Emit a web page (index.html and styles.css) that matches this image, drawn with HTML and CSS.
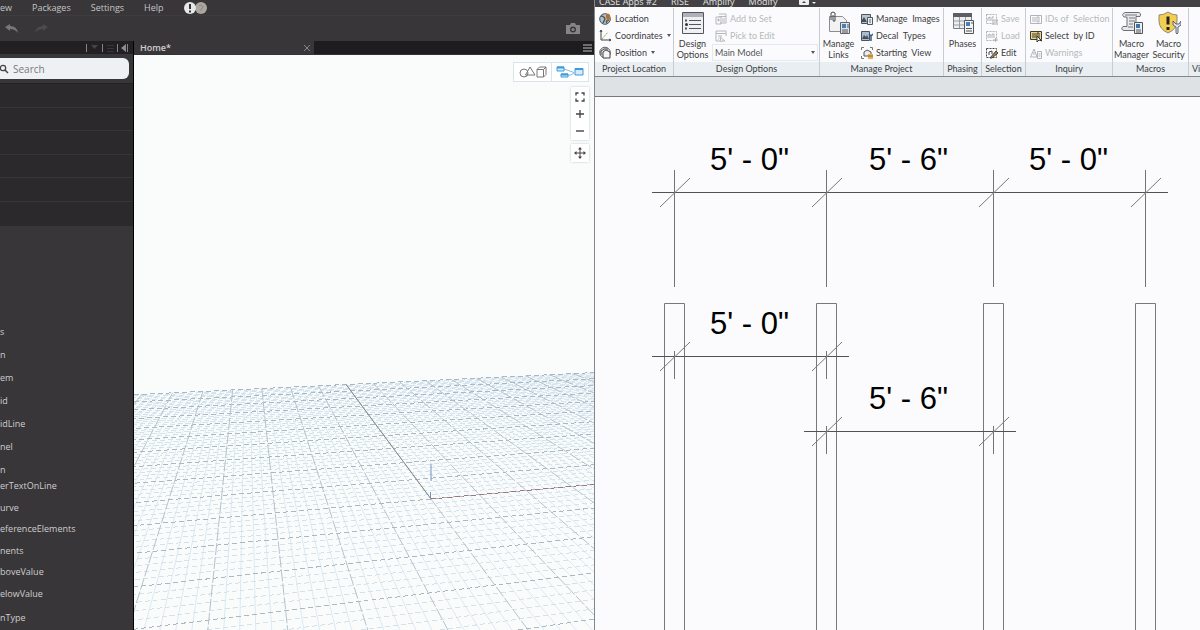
FILE: index.html
```html
<!DOCTYPE html>
<html lang="en">
<head>
<meta charset="utf-8">
<title>Home* - Graph workspace and model view</title>
<link rel="stylesheet" href="styles.css">
</head>
<body>
<div class="desktop">
  <section class="graph-app" aria-label="Graph editor">
    <nav class="menubar">
      <a href="#view">ew</a>
      <a href="#packages">Packages</a>
      <a href="#settings">Settings</a>
      <a href="#help">Help</a>
      <button class="notice" aria-label="Notifications">
        <svg width="24" height="14" viewBox="0 0 24 14"><circle cx="17" cy="7" r="6" fill="#a9a79f"/><circle cx="6" cy="7" r="6" fill="#e6e8ea"/><path d="M6 3v5M6 9.500v2" stroke="#333" stroke-width="2"/><path d="M15 5q2-2 3.500 0t-1.500 3v2" fill="none" stroke="#8b897f"/></svg>
      </button>
    </nav>
    <div class="toolbar">
      <button aria-label="Undo"><svg width="14" height="10" viewBox="0 0 14 10"><path d="M0 3 5 0v2q7 0 8 7Q10 5 5 5v2z" fill="#77777b"/></svg></button>
      <button aria-label="Redo"><svg width="14" height="10" viewBox="0 0 14 10"><path d="M14 3 9 0v2Q2 2 1 9q3-4 8-4v2z" fill="#4b4a4c"/></svg></button>
      <button class="camera" aria-label="Export image"><svg width="16" height="12" viewBox="0 0 16 12"><path d="M1 2h4l1-2h4l1 2h4v9H1z" fill="#858587"/><circle cx="8" cy="6.500" r="3" fill="#383638"/><circle cx="8" cy="6.500" r="1.600" fill="#858587"/></svg></button>
    </div>
    <div class="work">
      <aside class="library">
        <div class="library-head">
          <svg width="44" height="10" viewBox="0 0 44 10"><path d="M1.500 1v8M17.500 1v8M32.500 1v8M42.500 1v8" stroke="#858387"/><path d="M6 2h7L9.500 6z" fill="#454347"/><path d="M22 2.500h7M22 5.500h7M22 8.500h7" stroke="#38363a"/><path d="M41 1v8l-5-4z" fill="#8c8a8e"/></svg>
        </div>
        <div class="search">
          <label for="lib-search" aria-label="Search"><svg width="9" height="10" viewBox="0 0 9 10"><circle cx="3" cy="4" r="2.700" fill="none" stroke="#444" stroke-width="1.300"/><path d="M5 6 8 9" stroke="#444" stroke-width="1.500"/></svg></label>
          <input id="lib-search" type="text" placeholder="Search">
        </div>
        <ul class="categories"><li></li><li></li><li></li><li></li><li></li><li></li></ul>
        <ul class="nodes">
          <li>s</li><li>n</li><li>em</li><li>id</li><li>idLine</li><li>nel</li><li>n</li>
        </ul>
        <ul class="nodes nodes-tight">
          <li>erTextOnLine</li><li>urve</li><li>eferenceElements</li><li>nents</li><li>boveValue</li><li>elowValue</li>
        </ul>
        <ul class="nodes nodes-last"><li>nType</li></ul>
      </aside>
      <main class="workspace">
        <div class="tabs">
          <div class="tab"><span>Home*</span><button aria-label="Close tab"><svg width="8" height="8" viewBox="0 0 8 8"><path d="M1 1l6 6M7 1 1 7" stroke="#88868a"/></svg></button></div>
          <button class="tab-menu" aria-label="Tab list"><svg width="9" height="8" viewBox="0 0 9 8"><path d="M0 1h9M0 4h9M0 7h9" stroke="#8b898b" stroke-width="1.300"/></svg></button>
        </div>
        <div class="viewport">
          <svg id="ground" class="scene" viewBox="134 54 460 576" preserveAspectRatio="xMinYMin slice" aria-label="Ground grid"></svg>
          <div class="view-switch">
            <button aria-label="3D view"><svg width="28" height="12" viewBox="0 0 28 12" fill="none" stroke="#777"><circle cx="5" cy="7" r="4"/><path d="M6.500 9 11 1l5 8z"/><path d="M18 3.500h6.500V11H18zM18 3.500l2.500-2.500h6.500L24.500 3.500M27 1v7.500L24.500 11"/></svg></button>
            <button aria-label="Graph view"><svg width="28" height="12" viewBox="0 0 28 12" fill="#d4ebfa" stroke="#3c9cdb"><path d="M8 3 18 6.500M12 9h3l3-2" fill="none" stroke="#85bbdf"/><path d="M1 1h7v4H1zM5 8h7v3H5zM19 2.500h8V9h-8z"/><path d="M1 1.500h7M5 8.500h7M19 3h8" stroke-width="2"/></svg></button>
          </div>
          <div class="nav-tools">
            <div class="zoom-box">
              <button aria-label="Fit"><svg width="10" height="10" viewBox="0 0 10 10"><path d="M1 3.500V1h2.500M6.500 1H9v2.500M9 6.500V9H6.500M3.500 9H1V6.500" fill="none" stroke="#444" stroke-width="1.300"/></svg></button>
              <button aria-label="Zoom in"><svg width="8" height="8" viewBox="0 0 8 8"><path d="M4 0v8M0 4h8" stroke="#444" stroke-width="1.300"/></svg></button>
              <button aria-label="Zoom out"><svg width="8" height="8" viewBox="0 0 8 8"><path d="M0 4h8" stroke="#444" stroke-width="1.400"/></svg></button>
            </div>
            <div class="pan-box">
              <button aria-label="Pan"><svg width="12" height="12" viewBox="0 0 12 12"><path d="M6 1v10M1 6h10" stroke="#444"/><path d="M6 0 8 2.500H4zM6 12 4 9.500h4zM0 6 2.500 4v4zM12 6 9.500 8V4z" fill="#444"/></svg></button>
            </div>
          </div>
        </div>
      </main>
    </div>
  </section>

  <section class="model-app" aria-label="Model editor">
    <nav class="ribbon-tabs">
      <a href="#case">CASE Apps #2</a><a href="#rise">RISE</a><a href="#amplify">Amplify</a><a href="#modify">Modify</a>
      <button aria-label="Ribbon display"><svg width="18" height="7" viewBox="0 0 18 7"><rect x="0" y="0" width="10" height="6" rx="1" fill="#eee"/><path d="M3 4 5 2l2 2z" fill="#444"/><path d="M13 3h4l-2 2z" fill="#eee"/></svg></button>
    </nav>
    <div class="ribbon">
      <div class="group g-location">
        <div class="group-body">
          <div class="stack">
            <button class="cmd"><svg width="13" height="13" viewBox="0 0 13 13"><circle cx="6" cy="7" r="5.300" fill="#b9c3cb" stroke="#47525b"/><path d="M2 4q3 0 4 3l-2 4M8 11q-2-2 2-3" fill="none" stroke="#4e5a64" stroke-width="1.500"/><path d="M9 9Q6 5 7 3q2-3 4 0 1 2-2 6z" fill="#b5722d"/></svg>Location</button>
            <button class="cmd"><svg width="13" height="13" viewBox="0 0 13 13"><path d="M2 1v10h10M1 3l1-2 1 2M10 10l2 1-2 1" fill="none" stroke="#444"/><path d="M3 10 9 3" stroke="#999b45" stroke-dasharray="2 1"/></svg>Coordinates<i class="caret"></i></button>
            <button class="cmd"><svg width="13" height="13" viewBox="0 0 13 13"><circle cx="6" cy="6.500" r="5.300" fill="#dfe2e5" stroke="#666"/><path d="M4 12V6l3-2 4 2v6z" fill="#f5f5f5" stroke="#444"/><path d="M2 9V5l3-2h4" fill="none" stroke="#444"/></svg>Position<i class="caret"></i></button>
          </div>
        </div>
        <h2>Project Location</h2>
      </div>
      <div class="group g-options">
        <div class="group-body">
          <button class="big"><svg width="24" height="24" viewBox="0 0 24 24"><path d="M1.500 1.500h21v21h-21z" fill="#eef0f4" stroke="#55575c"/><path d="M2 2h20v4H2z" fill="#aeb1ba"/><path d="M8 9.500h12M8 13.500h12M8 17.500h12" stroke="#555"/><path d="M4 9.500h2M4 17.500h2" stroke="#555" stroke-width="2"/><circle cx="5.500" cy="13.500" r="1.500" fill="#333"/></svg><span>Design<br>Options</span></button>
          <div class="stack">
            <button class="cmd" disabled><svg width="12" height="12" viewBox="0 0 12 12" fill="none" stroke="#b4b7bb"><path d="M4 1h7v9H5M1 4h5v7H1zM4 3.500h7M7 6h3M7 8h3M2 7h3M3.500 5.500v3"/></svg>Add to Set</button>
            <button class="cmd" disabled><svg width="12" height="12" viewBox="0 0 12 12" fill="none" stroke="#b4b7bb"><path d="M1 1h10v5M1 1v10h4M1 3.500h10M3 6h4M5 7l5 4-3 0-1 1zM3 9h1"/></svg>Pick to Edit</button>
            <div class="picker"><select aria-label="Active option"><option>Main Model</option></select><i class="caret"></i></div>
          </div>
        </div>
        <h2>Design Options</h2>
      </div>
      <div class="group g-project">
        <div class="group-body">
          <button class="big"><svg width="24" height="24" viewBox="0 0 24 24"><path d="M2.500 5.500h13l4 4v11h-17z" fill="#f2f2f4" stroke="#8b8d91"/><path d="M4 9V2q2-2 4 0v8q-2 1-2-1V4" fill="none" stroke="#444"/><path d="M13.500 11.500h9v11h-9z" fill="#dce4ee" stroke="#5e636b"/><path d="M15 13h4v4h-4z" fill="#4a7fb5"/><path d="M20 14h2M20 16h2M15 19h6M15 21h6" stroke="#555"/></svg><span>Manage<br>Links</span></button>
          <div class="stack">
            <button class="cmd"><svg width="12" height="12" viewBox="0 0 12 12"><path d="M.5 1.500h9v9h-9z" fill="#b5c6d5" stroke="#4d535b"/><path d="M1 7 3 4l3 5H1z" fill="#44515b"/><path d="M6.500 4.500h5v7h-5z" fill="#e8edf4" stroke="#555"/><path d="M8 7h2M8 9h2" stroke="#3e6a9b"/></svg>Manage&nbsp; Images</button>
            <button class="cmd"><svg width="12" height="12" viewBox="0 0 12 12"><path d="M.5 1.500h8v9h-8z" fill="#a9bdcf" stroke="#4d535b"/><path d="M1 9 3 5l2 2 1-2 2 4z" fill="#44515b"/><path d="M10 5v6M8 4l2 2 2-2" fill="none" stroke="#345b85" stroke-width="1.500"/></svg>Decal&nbsp; Types</button>
            <button class="cmd"><svg width="12" height="12" viewBox="0 0 12 12"><path d="M.5 3V.5H3M9 .5h2.500V3M.5 9v2.500H3" fill="none" stroke="#777"/><path d="M3 9V5l3-2 4 2v4z" fill="#ececf0" stroke="#555"/><path d="M7 7h5v5H7z" fill="#e3b254"/><path d="M7 9h5" stroke="#8a682b"/></svg>Starting&nbsp; View</button>
          </div>
        </div>
        <h2>Manage Project</h2>
      </div>
      <div class="group g-phasing">
        <div class="group-body">
          <button class="big"><svg width="24" height="24" viewBox="0 0 24 24"><path d="M2.500 2.500h18v15h-18z" fill="#eceef1" stroke="#7b7e84"/><path d="M2 2h19v4H2z" fill="#5b5e65"/><path d="M3 10h17M3 14h17M8.500 6v11M14.500 6v11" stroke="#9a9da3"/><path d="M13.500 9.500h9v13h-9z" fill="#f1f4f8" stroke="#555"/><path d="M15 11h4v4h-4z" fill="#4a7fb5"/><path d="M20 12h2M15 17.500h6M15 20h6" stroke="#555"/></svg><span>Phases</span></button>
        </div>
        <h2>Phasing</h2>
      </div>
      <div class="group g-selection">
        <div class="group-body">
          <div class="stack">
            <button class="cmd" disabled><svg width="12" height="12" viewBox="0 0 12 12" fill="none" stroke="#aeb2b6"><path d="M.5 1.500h10v9H.500z" stroke-dasharray="2 1"/><path d="M2 8V5l2-1v4M6 8V4h2M7 7h5v5H7zM8 9h3"/></svg>Save</button>
            <button class="cmd" disabled><svg width="12" height="12" viewBox="0 0 12 12" fill="none" stroke="#aeb2b6"><path d="M.5 1.500h10v9H.500z" stroke-dasharray="2 1"/><path d="M2 8V5l2-1v4M6 8V4h2v4M7 10h5M9.500 8v4"/></svg>Load</button>
            <button class="cmd"><svg width="12" height="12" viewBox="0 0 12 12" fill="none" stroke="#444"><path d="M.5 1.500h10v9H.500z" stroke-dasharray="2 1"/><path d="M3 8V5l3-1v3"/><path d="M4 11 10 4l2 2-6 5z" fill="#a8824b"/></svg>Edit</button>
          </div>
        </div>
        <h2>Selection</h2>
      </div>
      <div class="group g-inquiry">
        <div class="group-body">
          <div class="stack">
            <button class="cmd" disabled><svg width="12" height="12" viewBox="0 0 12 12" fill="none" stroke="#b1b5b9"><path d="M.5 2.500h11v8H.500zM3 4v5M5 4v5M7 4h2v5H7z"/></svg>IDs of&nbsp; Selection</button>
            <button class="cmd"><svg width="12" height="12" viewBox="0 0 12 12" fill="none" stroke="#443c1f"><path d="M.5 1.500h11v8H.500z" fill="#e6d59a"/><path d="M3 3v5M5 3v5M7 3h2v5H7z"/><path d="M7 6v6l2-2 3 1z" fill="#fff" stroke="#333"/></svg>Select&nbsp; by ID</button>
            <button class="cmd" disabled><svg width="12" height="12" viewBox="0 0 12 12" fill="none" stroke="#b1b5b9"><path d="M.5 10 4 2l3 8zM4 5v3M7.500 4.500h4v7h-4zM8.500 7h2M8.500 9h2"/></svg>Warnings</button>
          </div>
        </div>
        <h2>Inquiry</h2>
      </div>
      <div class="group g-macros">
        <div class="group-body">
          <button class="big"><svg width="24" height="24" viewBox="0 0 24 24"><path d="M5 1.500h14q3 1 1 4h-4v14H4q-4-1-1-4h4V6H4q-3-3 1-4.500z" fill="#e7e8eb" stroke="#6d7076"/><path d="M9 7h6M9 10h6M9 13h4M8 16h5M5 4h12" stroke="#77797f"/><path d="M14.500 11.500h8v11h-8z" fill="#edf1f7" stroke="#555"/><path d="M16 13h4v4h-4z" fill="#3c74ad"/><path d="M16 19h5M16 21h5" stroke="#555"/></svg><span>Macro<br>Manager</span></button>
          <button class="big"><svg width="24" height="24" viewBox="0 0 24 24"><path d="M11 1q4 3 9 3v6q0 8-9 12-9-4-9-12V4q5 0 9-3z" fill="#f4ce50" stroke="#8f8a77"/><path d="M11 5.500v8M11 16v3" stroke="#222" stroke-width="3"/><path d="M16 10v4l3 2v6q1 2 2 0v-6l3-2v-4l-2 3h-3z" fill="#dfe3e9" stroke="#5e666f"/></svg><span>Macro<br>Security</span></button>
        </div>
        <h2>Macros</h2>
      </div>
      <div class="group g-view">
        <div class="group-body"><div class="big cut"><span>D</span></div></div>
        <h2>Vi</h2>
      </div>
    </div>
    <div class="options-bar"></div>
    <div class="drawing">
      <svg class="scene" viewBox="595 97 605 533" preserveAspectRatio="xMinYMin slice" aria-label="Plan view with dimensions">
        <g class="walls">
          <path d="M664.500 640V303.500h20V640M816.500 640V303.500h20V640M983.500 640V303.500h20V640M1135.500 640V303.500h20V640"/>
        </g>
        <g class="dims">
          <path d="M652 192.500h516M652 356.500h197M804 431.500h212"/>
          <path class="thin" d="M674.500 170v117M826.500 170v117M993.500 170v117M1145.500 170v117M674.500 351v28M826.500 351v28M826.500 426v28M993.500 426v28"/>
          <path class="tick" d="M660 207l30-29M812 207l30-29M979 207l30-29M1131 207l30-29M660 371l30-29M812 371l30-29M812 446l30-29M979 446l30-29"/>
        </g>
        <g class="values">
          <text x="710" y="170">5' - 0"</text><text x="869" y="170">5' - 6"</text><text x="1029" y="170">5' - 0"</text>
          <text x="710" y="334">5' - 0"</text><text x="869" y="409">5' - 6"</text>
        </g>
      </svg>
    </div>
  </section>
</div>
<script src="grid.js"></script>
</body>
</html>
```

FILE: grid.js
```js
// Projects the ground plane (10 major cells each way, 5 minor cells per major) into the viewport.
const NS = 'http://www.w3.org/2000/svg';
const ground = document.getElementById('ground');

function project(u, v) {
  const w = 0.0173 * u - 0.0858 * v + 1;
  return [(56.7 * u - 21.2 * v + 431) / w, (4.2 * u - 21.45 * v + 498) / w];
}

function addLine(a, b, cls) {
  const line = document.createElementNS(NS, 'line');
  line.setAttribute('x1', a[0].toFixed(1));
  line.setAttribute('y1', a[1].toFixed(1));
  line.setAttribute('x2', b[0].toFixed(1));
  line.setAttribute('y2', b[1].toFixed(1));
  line.setAttribute('class', cls);
  ground.appendChild(line);
}

const NEAR = 6;
for (const major of [false, true]) {
  for (let i = -50; i <= 50; i++) {
    if ((i % 5 === 0) !== major) continue;
    const t = i / 5;
    const kind = major ? 'major' : 'minor';
    if (t <= NEAR) addLine(project(-8.5, t), project(10, t), kind + ' across');
    if (t > -9) addLine(project(t, -10), project(t, NEAR), kind + ' deep');
  }
}
addLine(project(0, -10), project(0, 0), 'axis-y');
addLine(project(0, 0), project(10, 0), 'axis-x');
addLine([431, 463], [431, 480], 'axis-z');
addLine([430.5, 491], [430.5, 498], 'axis-z');
```

FILE: styles.css
```css
* { box-sizing: border-box; }
body { margin: 0; font-family: "Open Sans", "Noto Sans", sans-serif; font-size: 9px; }
button { margin: 0; padding: 0; border: 0; background: none; font: inherit; color: inherit; display: flex; align-items: center; justify-content: center; }
ul { list-style: none; margin: 0; padding: 0; }
a { color: inherit; text-decoration: none; }
svg { display: block; flex: none; }
.desktop { display: flex; height: 100vh; overflow: hidden; }
.graph-app { width: 49.5%; display: flex; flex-direction: column; background: #383638; color: #c6c4c6; }
.menubar { display: flex; align-items: center; height: 15px; gap: 20px; }
.toolbar { display: flex; align-items: center; height: 26px; padding: 0 13px 0 5px; gap: 15px; border-top: 1px solid #3e3c3f; }
.toolbar .camera { margin-left: auto; }
.work { display: flex; flex: 1; min-height: 0; }
.library { width: 134px; flex: none; border-right: 1px solid #000; overflow: hidden; }
.library-head { height: 13px; background: #222022; display: flex; align-items: center; justify-content: flex-end; padding-right: 4px; }
.search { display: flex; align-items: center; height: 21px; margin: 4px 4px 4px 0; background: #eef1f3; border-radius: 0 6px 6px 0; }
.search input { flex: 1; min-width: 0; border: 0; padding: 0 0 0 4px; background: none; font: 10px "Open Sans", sans-serif; outline: 0; }
.search input::placeholder { color: #77797a; opacity: 1; }
.categories { background: #2b292b; padding-bottom: 1px; border-top: 1px solid #232123; }
.categories li { height: 24px; border-bottom: 1px solid #343733; }
.categories li:nth-child(even) { height: 23px; }
.categories li:last-child { border: 0; }
.nodes { padding-top: 95px; color: #cfcdcf; }
.nodes li { height: 23px; line-height: 22px; }
.nodes-tight { padding-top: 0; margin-top: -7px; }
.nodes-tight li { height: 22px; line-height: 22px; }
.nodes-tight li:nth-child(even) { height: 21px; }
.nodes-last { padding-top: 3px; }
.workspace { flex: 1; min-width: 0; display: flex; flex-direction: column; }
.tabs { display: flex; justify-content: space-between; height: 13px; background: #1e1c1e; padding-right: 2px; }
.tab { width: 180px; display: flex; align-items: center; justify-content: space-between; padding: 0 3px 0 6px; background: #383638; color: #d0ced0; font-weight: 600; }
.viewport { position: relative; flex: 1; min-height: 0; background: #fafcfc; border-top: 1px solid #333; overflow: hidden; }
.scene { width: 100%; height: 100%; }
.minor { stroke: #d3e3ed; }
.minor.deep { stroke: #dde9f1; }
.major { stroke: #a9b8c4; }
.major.deep { stroke: #b5c2cc; }
.across { stroke-dasharray: 5 3; shape-rendering: crispEdges; }
.major.deep { stroke-dasharray: 12 2; }
.axis-y { stroke: #84878a; }
.axis-x { stroke: #9d7779; stroke-dasharray: 5 3; shape-rendering: crispEdges; }
.axis-z { stroke: #7391b5; }
.view-switch { position: absolute; top: 7px; right: 5px; display: flex; background: #fff; border: 1px solid #dbe4ea; }
.view-switch button { width: 37px; height: 18px; }
.view-switch button + button { border-left: 1px solid #dbe4ea; }
.nav-tools { position: absolute; top: 32px; right: 5px; display: grid; gap: 4px; }
.zoom-box, .pan-box { width: 18px; background: #fff; box-shadow: 0 0 2px #b9c2c8; }
.zoom-box { padding: 1px 0; }
.nav-tools button { width: 18px; height: 17px; }
.pan-box button { height: 18px; }

.model-app { flex: 1; min-width: 0; display: flex; flex-direction: column; border-left: 1px solid #85888b; background: #fbfbfd; color: #3c3c3e; font-family: Lato, "Open Sans", sans-serif; }
.ribbon-tabs { display: flex; align-items: flex-end; height: 7px; padding-left: 4px; gap: 14px; overflow: hidden; background: #434144; color: #e2e2e2; font-family: "Open Sans", sans-serif; line-height: 10px; white-space: nowrap; }
.ribbon-tabs button { margin: 0 0 1px 8px; }
.ribbon { display: flex; height: 70px; padding-top: 1px; overflow: hidden; border-bottom: 1px solid #84878a; }
.group { flex: none; display: flex; flex-direction: column; border-right: 1px solid #c6ccd2; white-space: nowrap; overflow: hidden; }
.group-body { flex: 1; display: flex; align-items: flex-start; padding: 2px 1px 0; gap: 2px; }
.group h2 { margin: 0; height: 14px; line-height: 13px; font-size: 9px; font-weight: 400; text-align: center; background: #e9eef2; }
.g-location { width: 79px; }
.g-options { width: 146px; }
.g-project { width: 124px; }
.g-phasing { width: 38px; }
.g-selection { width: 44px; }
.g-inquiry { width: 87px; }
.g-macros { width: 76px; }
.g-view { flex: 1; border: 0; }
.stack { display: grid; grid-auto-rows: 17px; flex: 1; }
.cmd { justify-content: flex-start; gap: 3px; padding-left: 3px; line-height: 12px; }
.cmd:disabled { color: #b5bab8; }
.caret { border: 2px solid transparent; border-top: 3px solid #555; border-bottom: 0; margin-left: 1px; }
.big { flex-direction: column; flex: none; min-width: 35px; gap: 3px; line-height: 11px; padding-top: 1px; text-align: center; }
.cut { padding: 30px 0 0 6px; color: #c2c7c4; }
.g-view h2 { text-align: left; padding-left: 3px; }
.picker { display: flex; align-items: center; border: 1px solid #e5e9ed; padding-right: 2px; }
select { appearance: none; flex: 1; min-width: 0; border: 0; background: none; font: inherit; color: #55585a; padding: 0 2px; }
.options-bar { height: 20px; background: #dfe2e5; border-bottom: 1px solid #777a7d; }
.drawing { flex: 1; min-height: 0; }
.walls path { fill: none; stroke: #77797b; }
.dims path { fill: none; stroke: #505253; }
.dims .thin { stroke: #717375; }
.dims .tick { stroke: #77797a; }
.values { font: 31px "Liberation Sans", Arial, sans-serif; fill: #000; }
```
